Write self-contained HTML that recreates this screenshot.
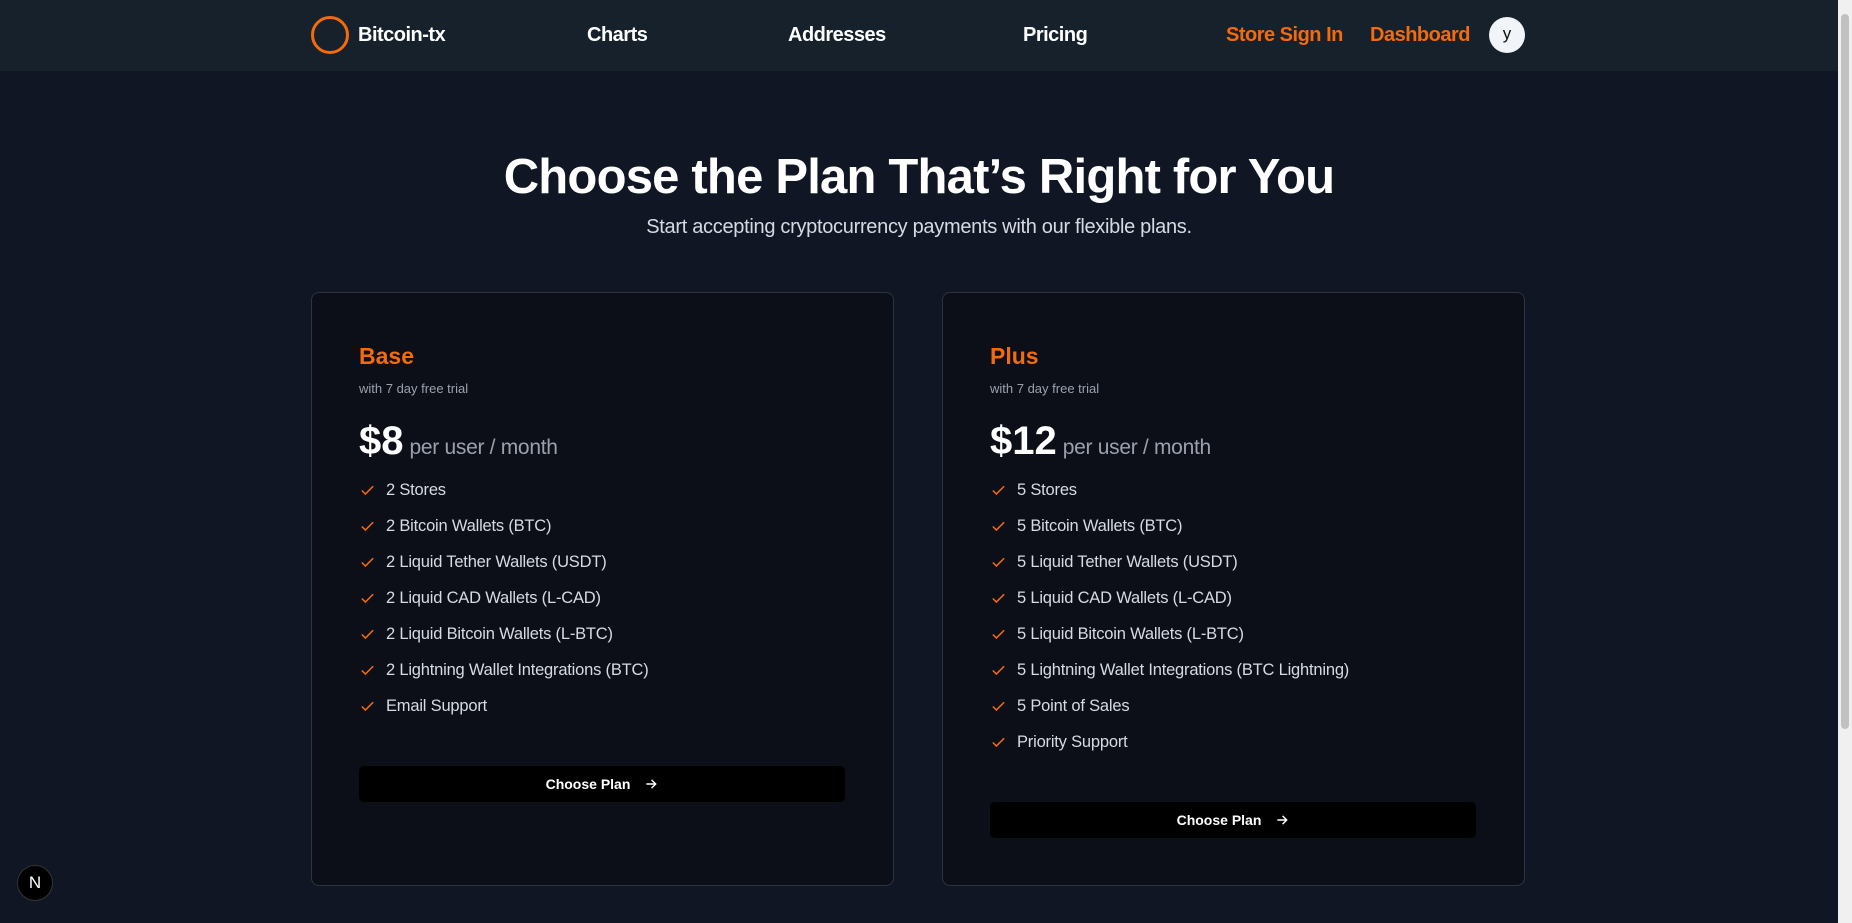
<!DOCTYPE html>
<html><head><meta charset="utf-8"><style>
*{margin:0;padding:0;box-sizing:border-box}
body{width:1852px;height:923px;overflow:hidden;background:#101624;font-family:"Liberation Sans",sans-serif;color:#fff;position:relative}
.nav{position:absolute;left:0;top:0;width:1838px;height:71px;background:#17212c}
.nav span{position:absolute;top:24px;font-size:20px;font-weight:bold;letter-spacing:-0.5px}
.logo{position:absolute;left:311px;top:16px;width:38px;height:38px;border:3.5px solid #f36b0b;border-radius:50%}
.av{position:absolute;left:1489px;top:17px;width:36px;height:36px;border-radius:50%;background:#f1f5f9;color:#111;font-size:17px;text-align:center;line-height:34px}
.or{color:#f36b0b}
h1{position:absolute;left:0;width:1838px;top:149px;text-align:center;font-size:49px;font-weight:bold;letter-spacing:-0.8px}
.sub{position:absolute;left:0;width:1838px;top:216px;text-align:center;font-size:20px;color:#d6dbe3;letter-spacing:-0.3px}
.card{position:absolute;top:292px;width:583px;height:594px;background:#0c0f18;border:1px solid #2c3342;border-radius:8px}
.t{position:absolute;left:47px;top:50px;font-size:23px;font-weight:bold;color:#f36b0b}
.tr{position:absolute;left:47px;top:88px;font-size:13px;color:#9aa1ad}
.pr{position:absolute;left:47px;top:126px;font-size:40px;font-weight:bold}
.pr small{font-size:21px;font-weight:normal;color:#9aa1ad;margin-left:6px;letter-spacing:-0.3px}
ul{position:absolute;left:47px;top:179px;list-style:none}
li{height:36px;font-size:16.5px;color:#d6dbe3;display:flex;align-items:center;letter-spacing:-0.2px}
li svg{margin-right:10px}
.btn{position:absolute;left:47px;width:486px;height:36px;background:#000;border-radius:5px;font-size:14px;font-weight:bold;display:flex;align-items:center;justify-content:center;gap:14px}
.sb{position:absolute;right:0;top:0;width:14px;height:923px;background:#f0f0f0}
.sb div{position:absolute;left:3px;top:14px;width:8px;height:715px;background:#c1c1c1;border-radius:4px}
.n{position:absolute;left:17px;top:865px;width:36px;height:36px;border-radius:50%;background:#000;border:1px solid #333;color:#fff;font-size:17px;text-align:center;line-height:34px}
</style></head><body>
<div class="nav">
<div class="logo"></div>
<span style="left:358px">Bitcoin-tx</span>
<span style="left:587px">Charts</span>
<span style="left:788px">Addresses</span>
<span style="left:1023px">Pricing</span>
<span class="or" style="left:1226px">Store Sign In</span>
<span class="or" style="left:1370px">Dashboard</span>
<div class="av">y</div>
</div>
<h1>Choose the Plan That’s Right for You</h1>
<div class="sub">Start accepting cryptocurrency payments with our flexible plans.</div>

<div class="card" style="left:311px">
<div class="t">Base</div><div class="tr">with 7 day free trial</div>
<div class="pr">$8<small>per user / month</small></div>
<ul>
<li><svg width="17" height="17" viewBox="0 0 24 24"><path d="M4 12l5 5L20 6" fill="none" stroke="#f36b0b" stroke-width="2.2"/></svg>2 Stores</li>
<li><svg width="17" height="17" viewBox="0 0 24 24"><path d="M4 12l5 5L20 6" fill="none" stroke="#f36b0b" stroke-width="2.2"/></svg>2 Bitcoin Wallets (BTC)</li>
<li><svg width="17" height="17" viewBox="0 0 24 24"><path d="M4 12l5 5L20 6" fill="none" stroke="#f36b0b" stroke-width="2.2"/></svg>2 Liquid Tether Wallets (USDT)</li>
<li><svg width="17" height="17" viewBox="0 0 24 24"><path d="M4 12l5 5L20 6" fill="none" stroke="#f36b0b" stroke-width="2.2"/></svg>2 Liquid CAD Wallets (L-CAD)</li>
<li><svg width="17" height="17" viewBox="0 0 24 24"><path d="M4 12l5 5L20 6" fill="none" stroke="#f36b0b" stroke-width="2.2"/></svg>2 Liquid Bitcoin Wallets (L-BTC)</li>
<li><svg width="17" height="17" viewBox="0 0 24 24"><path d="M4 12l5 5L20 6" fill="none" stroke="#f36b0b" stroke-width="2.2"/></svg>2 Lightning Wallet Integrations (BTC)</li>
<li><svg width="17" height="17" viewBox="0 0 24 24"><path d="M4 12l5 5L20 6" fill="none" stroke="#f36b0b" stroke-width="2.2"/></svg>Email Support</li>
</ul>
<div class="btn" style="top:473px">Choose Plan <svg width="14" height="14" viewBox="0 0 24 24"><path d="M4 12h16M13 5l7 7-7 7" fill="none" stroke="#fff" stroke-width="2.5"/></svg></div>
</div>

<div class="card" style="left:942px">
<div class="t">Plus</div><div class="tr">with 7 day free trial</div>
<div class="pr">$12<small>per user / month</small></div>
<ul>
<li><svg width="17" height="17" viewBox="0 0 24 24"><path d="M4 12l5 5L20 6" fill="none" stroke="#f36b0b" stroke-width="2.2"/></svg>5 Stores</li>
<li><svg width="17" height="17" viewBox="0 0 24 24"><path d="M4 12l5 5L20 6" fill="none" stroke="#f36b0b" stroke-width="2.2"/></svg>5 Bitcoin Wallets (BTC)</li>
<li><svg width="17" height="17" viewBox="0 0 24 24"><path d="M4 12l5 5L20 6" fill="none" stroke="#f36b0b" stroke-width="2.2"/></svg>5 Liquid Tether Wallets (USDT)</li>
<li><svg width="17" height="17" viewBox="0 0 24 24"><path d="M4 12l5 5L20 6" fill="none" stroke="#f36b0b" stroke-width="2.2"/></svg>5 Liquid CAD Wallets (L-CAD)</li>
<li><svg width="17" height="17" viewBox="0 0 24 24"><path d="M4 12l5 5L20 6" fill="none" stroke="#f36b0b" stroke-width="2.2"/></svg>5 Liquid Bitcoin Wallets (L-BTC)</li>
<li><svg width="17" height="17" viewBox="0 0 24 24"><path d="M4 12l5 5L20 6" fill="none" stroke="#f36b0b" stroke-width="2.2"/></svg>5 Lightning Wallet Integrations (BTC Lightning)</li>
<li><svg width="17" height="17" viewBox="0 0 24 24"><path d="M4 12l5 5L20 6" fill="none" stroke="#f36b0b" stroke-width="2.2"/></svg>5 Point of Sales</li>
<li><svg width="17" height="17" viewBox="0 0 24 24"><path d="M4 12l5 5L20 6" fill="none" stroke="#f36b0b" stroke-width="2.2"/></svg>Priority Support</li>
</ul>
<div class="btn" style="top:509px">Choose Plan <svg width="14" height="14" viewBox="0 0 24 24"><path d="M4 12h16M13 5l7 7-7 7" fill="none" stroke="#fff" stroke-width="2.5"/></svg></div>
</div>

<div class="n">N</div>
<div class="sb"><div></div></div>
</body></html>
